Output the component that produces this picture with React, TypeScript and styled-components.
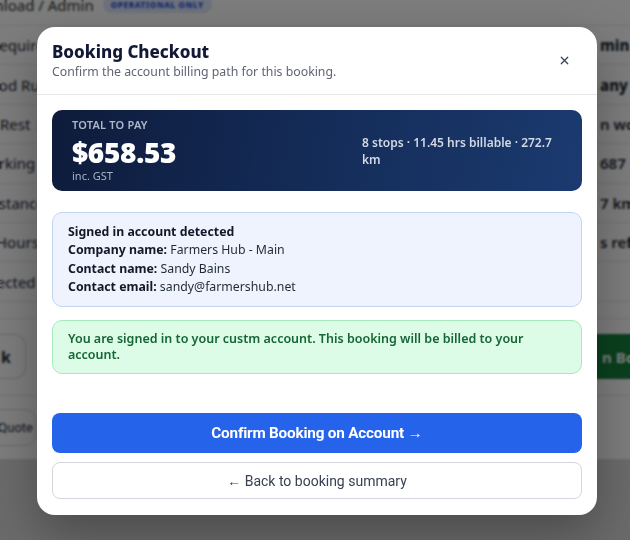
import { createGlobalStyle, styled } from "styled-components";
import { X } from "lucide-react";

const GlobalStyle = createGlobalStyle`
  html, body {
    margin: 0;
    padding: 0;
    background: #d6d6d6;
    font-family: "Noto Sans", "Open Sans", sans-serif;
    overflow: hidden;
  }
  * { box-sizing: border-box; }
`;

// ---- page behind the dialog ----

const Page = styled.div`
  margin: -12px -70px 0 -10px;
  background: #fbfbfb;
  color: #1f2937;
`;

const TopBar = styled.div`
  display: flex;
  align-items: center;
  gap: 9px;
  height: 38px;
  padding-bottom: 4px;
  margin-left: -27px;
  font-size: 15px;
  color: #333;
  border-bottom: 1px solid #e4e4e4;
`;

const Badge = styled.span`
  background: #dbe4fb;
  color: #1d4ed8;
  font-size: 8px;
  font-weight: 800;
  letter-spacing: 0.7px;
  padding: 3px 8px;
  border-radius: 8px;
`;

const Row = styled.div`
  display: grid;
  grid-template-columns: 1fr 100px;
  align-items: center;
  height: 39.4px;
  font-size: 15px;
  border-bottom: 1px solid #e4e4e4;
`;

const Label = styled.span<{ $shift?: number }>`
  margin-left: ${(p) => p.$shift ?? 0}px;
  white-space: nowrap;
`;

const Value = styled.span<{ $bold?: boolean }>`
  font-weight: ${(p) => (p.$bold ? 800 : 600)};
  white-space: nowrap;
`;

const Pill = styled.span`
  display: inline-block;
  width: 12px;
  height: 16px;
  margin-left: 6px;
  border-radius: 8px;
  background: #e7e7e7;
  vertical-align: middle;
`;

const Spacer = styled.div`
  height: 17px;
  border-bottom: 1px solid #e4e4e4;
`;

const ActionRow = styled.div`
  display: flex;
  justify-content: space-between;
  align-items: center;
  height: 77px;
  border-bottom: 1px solid #e4e4e4;
`;

const GhostBtn = styled.div`
  width: 36px;
  height: 45px;
  border: 1px solid #cfcfcf;
  border-left: none;
  border-radius: 0 12px 12px 0;
  display: flex;
  align-items: center;
  justify-content: flex-end;
  padding-right: 14px;
  font-size: 16px;
  font-weight: 700;
  overflow: hidden;
`;

const GreenBtn = styled.div`
  width: 110px;
  height: 45px;
  background: #15803d;
  color: #fff;
  display: flex;
  align-items: center;
  padding-left: 12px;
  font-size: 15px;
  font-weight: 700;
  white-space: nowrap;
  overflow: hidden;
`;

const QuoteRow = styled.div`
  display: flex;
  align-items: center;
  height: 63px;
  font-size: 13px;
`;

const QuoteBtn = styled.div`
  width: 46px;
  height: 37px;
  border: 1px solid #d4d4d4;
  border-left: none;
  border-radius: 0 10px 10px 0;
  display: flex;
  align-items: center;
  justify-content: flex-end;
  padding-right: 2px;
  font-family: "Roboto", sans-serif;
  overflow: hidden;
`;

const Backdrop = styled.div`
  position: fixed;
  inset: 0;
  background: rgba(0, 0, 0, 0.5);
  backdrop-filter: blur(1px);
`;

// ---- dialog ----

const Modal = styled.div`
  position: fixed;
  left: 37px;
  top: 27px;
  width: 560px;
  background: #fff;
  border-radius: 18px;
  box-shadow: 0 20px 50px rgba(0, 0, 0, 0.3);
  overflow: hidden;
`;

const Header = styled.div`
  display: flex;
  justify-content: space-between;
  align-items: center;
  padding: 14px 26px 14px 15px;
  border-bottom: 1px solid #e5e7eb;
`;

const Title = styled.h2`
  margin: 0;
  font-size: 17px;
  font-weight: 800;
  color: #111936;
  line-height: 22px;
`;

const Subtitle = styled.p`
  margin: 1px 0 0;
  font-size: 12.3px;
  color: #5f6472;
  line-height: 16px;
`;

const CloseBtn = styled.button`
  border: none;
  background: none;
  padding: 0;
  display: flex;
  color: #374151;
`;

const Body = styled.div`
  padding: 15px 15px 16px;
  display: flex;
  flex-direction: column;
`;

const TotalCard = styled.div`
  display: flex;
  justify-content: space-between;
  align-items: center;
  height: 81px;
  padding: 0 15px 0 20px;
  border-radius: 10px;
  background: linear-gradient(100deg, #0e1b3b 0%, #142c58 50%, #1b3a6f 100%);
  color: #fff;
`;

const TotalLabel = styled.div`
  font-size: 11px;
  font-weight: 600;
  color: #aeb7c8;
  letter-spacing: 0.2px;
  line-height: 14px;
  margin-bottom: 3px;
`;

const Amount = styled.div`
  font-size: 28px;
  font-weight: 900;
  line-height: 34px;
  letter-spacing: -0.3px;
`;

const SmallNote = styled.div`
  font-size: 11px;
  color: #aab3c4;
  line-height: 14px;
`;

const TripInfo = styled.div`
  width: 205px;
  font-size: 12px;
  font-weight: 600;
  line-height: 17px;
  color: #d3d9e4;
`;

const InfoBox = styled.div<{ $tone: "blue" | "green" }>`
  border-radius: 10px;
  border: 1px solid ${(p) => (p.$tone === "blue" ? "#c3d4f3" : "#a6e9bd")};
  background: ${(p) => (p.$tone === "blue" ? "#eef3fe" : "#dcfce7")};
  color: ${(p) => (p.$tone === "blue" ? "#1f2937" : "#166534")};
  padding: ${(p) => (p.$tone === "blue" ? "10px 15px 10px" : "10px 15px 11px")};
  font-size: ${(p) => (p.$tone === "blue" ? "12.3px" : "12.5px")};
  line-height: ${(p) => (p.$tone === "blue" ? "18.3px" : "15.5px")};
  font-weight: ${(p) => (p.$tone === "green" ? 600 : 400)};
  margin-top: ${(p) => (p.$tone === "blue" ? "21px" : "13px")};
`;

const Strong = styled.b`
  font-weight: 700;
  color: #111827;
`;

const Primary = styled.button`
  margin-top: 39px;
  height: 40px;
  border: none;
  border-radius: 8px;
  background: #2563eb;
  color: #fff;
  font-family: "Roboto", sans-serif;
  font-size: 15.3px;
  font-weight: 700;
  letter-spacing: -0.2px;
`;

const Secondary = styled.button`
  margin-top: 9px;
  height: 37px;
  border: 1px solid #d4d7dd;
  border-radius: 8px;
  background: #fff;
  color: #374151;
  font-family: "Roboto", sans-serif;
  font-size: 14px;
`;

export default function App() {
  return (
    <>
      <GlobalStyle />
      <Page>
        <TopBar>
          <span>Download / Admin</span>
          <Badge>OPERATIONAL ONLY</Badge>
        </TopBar>
        <Row>
          <Label>Required</Label>
          <Value $bold>min cap</Value>
        </Row>
        <Row>
          <Label $shift={-8}>Food Run</Label>
          <Value $bold>any</Value>
        </Row>
        <Row>
          <Label $shift={10}>
            Rest<Pill />
          </Label>
          <Value>n work</Value>
        </Row>
        <Row>
          <Label $shift={-14}>Working Time</Label>
          <Value>687 min</Value>
        </Row>
        <Row>
          <Label $shift={-6}>Distance</Label>
          <Value>7 km</Value>
        </Row>
        <Row>
          <Label $shift={6}>Hours Adjusted</Label>
          <Value>s reference</Value>
        </Row>
        <Row>
          <Label $shift={-18}>Detected</Label>
          <span />
        </Row>
        <Spacer />
        <ActionRow>
          <GhostBtn>k</GhostBtn>
          <GreenBtn>n Booking</GreenBtn>
        </ActionRow>
        <QuoteRow>
          <QuoteBtn>Quote</QuoteBtn>
        </QuoteRow>
      </Page>
      <Backdrop />
      <Modal>
        <Header>
          <div>
            <Title>Booking Checkout</Title>
            <Subtitle>Confirm the account billing path for this booking.</Subtitle>
          </div>
          <CloseBtn aria-label="Close">
            <X size={13} strokeWidth={2.2} />
          </CloseBtn>
        </Header>
        <Body>
          <TotalCard>
            <div>
              <TotalLabel>TOTAL TO PAY</TotalLabel>
              <Amount>$658.53</Amount>
              <SmallNote>inc. GST</SmallNote>
            </div>
            <TripInfo>8 stops · 11.45 hrs billable · 272.7 km</TripInfo>
          </TotalCard>
          <InfoBox $tone="blue">
            <Strong>Signed in account detected</Strong>
            <div>
              <Strong>Company name:</Strong> Farmers Hub - Main
            </div>
            <div>
              <Strong>Contact name:</Strong> Sandy Bains
            </div>
            <div>
              <Strong>Contact email:</Strong> sandy@farmershub.net
            </div>
          </InfoBox>
          <InfoBox $tone="green">
            You are signed in to your custm account. This booking will be billed
            to your account.
          </InfoBox>
          <Primary>Confirm Booking on Account →</Primary>
          <Secondary>← Back to booking summary</Secondary>
        </Body>
      </Modal>
    </>
  );
}
